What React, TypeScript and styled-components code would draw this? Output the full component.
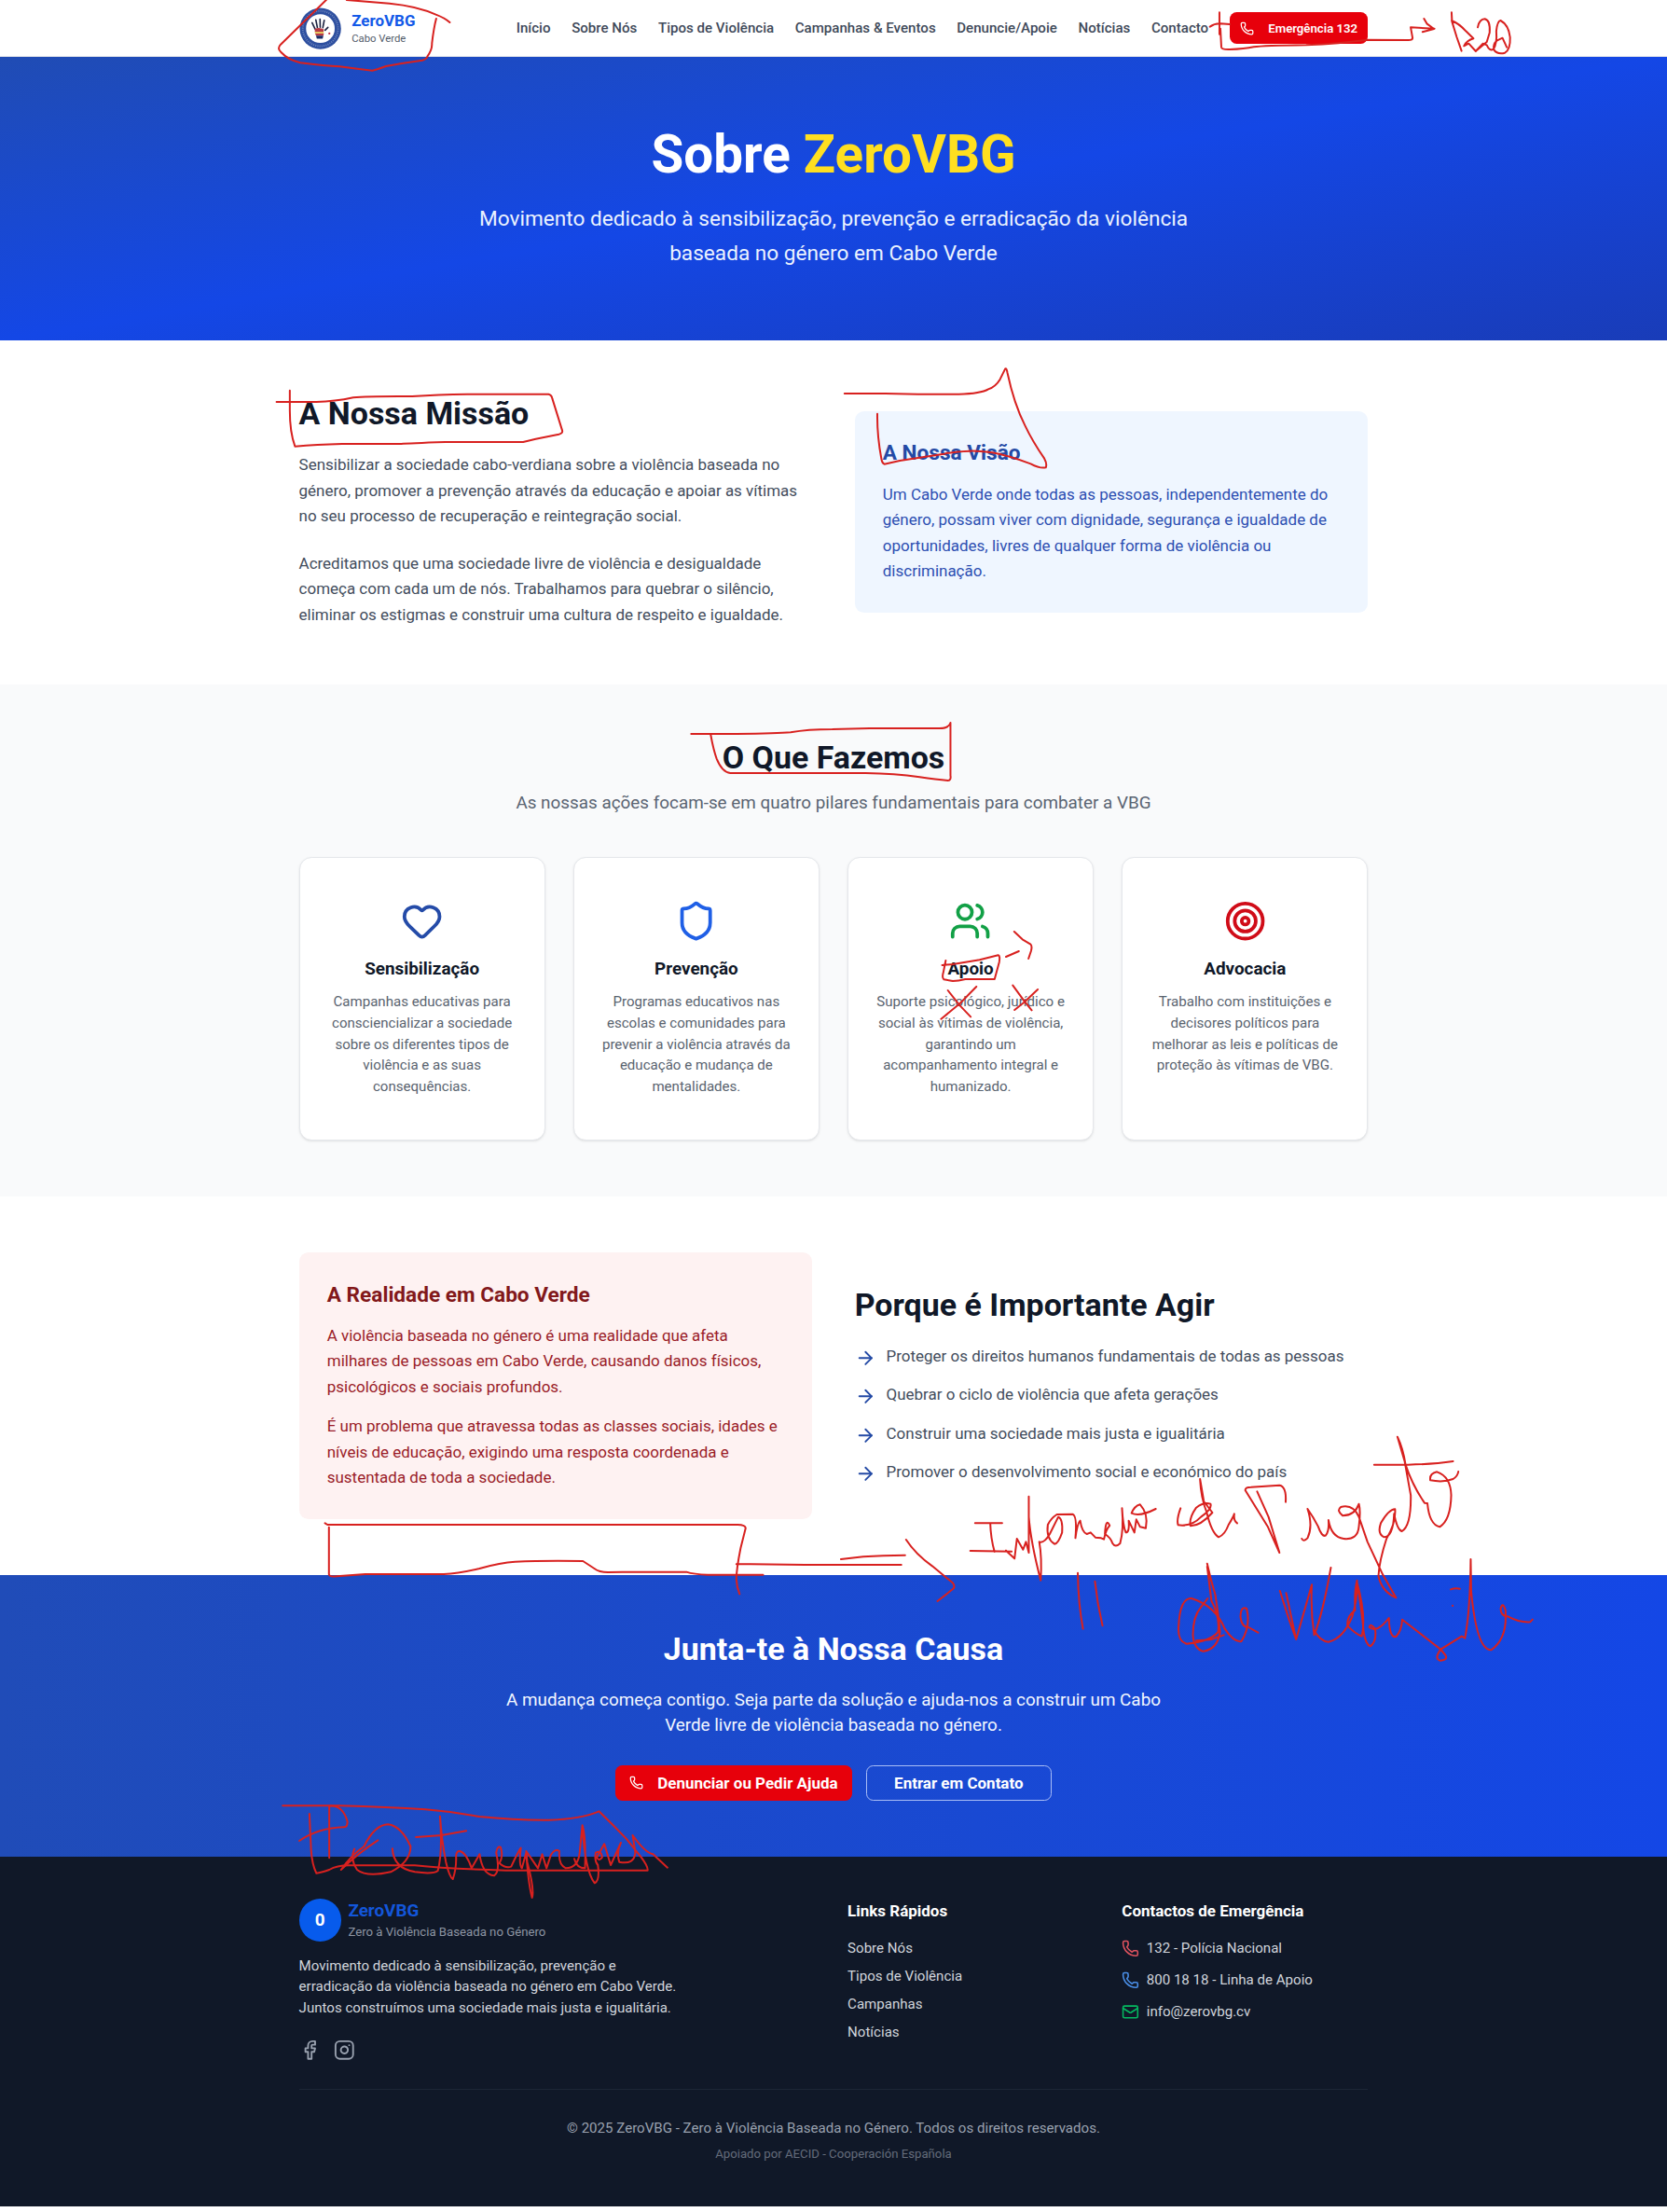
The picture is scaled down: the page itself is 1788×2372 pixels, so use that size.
import React from "react";
import styled, { createGlobalStyle } from "styled-components";
import {
  ArrowRight,
  Facebook,
  Heart,
  Instagram,
  Mail,
  Phone,
  Shield,
  Target,
  Users,
} from "lucide-react";

const GlobalStyle = createGlobalStyle`
  html { font-size: 15.09px; }
  *, *::before, *::after { box-sizing: border-box; }
  body {
    margin: 0;
    background: #fff;
    color: #101828;
    font-family: Roboto, "Liberation Sans", sans-serif;
    line-height: 1.5;
  }
  h1, h2, h3, h4, p, ul { margin: 0; padding: 0; }
  ul { list-style: none; }
  a { color: inherit; text-decoration: none; }
  button { font-family: inherit; }
  svg { display: block; flex-shrink: 0; }
`;

const Page = styled.div`
  position: relative;
  overflow: hidden;
`;

const Container = styled.div`
  width: 76rem;
  margin: 0 auto;
`;

/* Header */

const Header = styled.header`
  background: #fff;
  border-bottom: 1px solid #e5e7eb;
`;

const HeaderRow = styled(Container)`
  display: flex;
  align-items: center;
  justify-content: space-between;
  height: 4rem;
`;

const Brand = styled.a<{ $gap: string }>`
  display: flex;
  align-items: center;
  gap: ${(p) => p.$gap};
`;

const BrandName = styled.div`
  font-size: 1.125rem;
  line-height: 1.5rem;
  font-weight: 700;
  color: #1259e8;
`;

const BrandPlace = styled.div`
  font-size: 0.75rem;
  line-height: 1rem;
  color: #535d6b;
`;

const Nav = styled.nav`
  display: flex;
  align-items: center;
  gap: 1.5rem;
`;

const NavLink = styled.a`
  font-size: 1rem;
  font-weight: 500;
  color: #3f4a5a;
  white-space: nowrap;
`;

const Button = styled.button<{ $kind: "danger" | "outline"; $size: "sm" | "lg" }>`
  display: inline-flex;
  align-items: center;
  justify-content: center;
  gap: 1rem;
  white-space: nowrap;
  color: #fff;
  border-radius: 0.5rem;
  font-weight: ${(p) => (p.$size === "sm" ? 600 : 700)};
  font-size: ${(p) => (p.$size === "sm" ? "0.875rem" : "1.125rem")};
  height: ${(p) => (p.$size === "sm" ? "2.25rem" : "2.5rem")};
  padding: 0 ${(p) => (p.$kind === "outline" ? "1.95rem" : p.$size === "sm" ? "0.75rem" : "1rem")};
  background: ${(p) => (p.$kind === "danger" ? "#e7000b" : "transparent")};
  border: ${(p) => (p.$kind === "danger" ? "none" : "1px solid #a9bdf6")};
`;

/* Hero */

const Hero = styled.section`
  background: linear-gradient(to bottom right, #204cb4, #1447e6 50%, #193cb8);
  padding: 5.05rem 0 4.92rem;
  text-align: center;
`;

const HeroTitle = styled.h1`
  font-size: 3.75rem;
  line-height: 1;
  font-weight: 700;
  color: #fff;
  margin-bottom: 1.5rem;

  span { color: #ffdf20; }
`;

const HeroText = styled.p`
  width: 56rem;
  margin: 0 auto;
  font-size: 1.5rem;
  line-height: 1.625;
  color: #eaf2ff;
`;

/* Shared sections */

const Section = styled.section<{ $tint?: boolean }>`
  padding: 4rem 0;
  background: ${(p) => (p.$tint ? "#f9fafb" : "#fff")};
`;

const TwoColumns = styled(Container)`
  display: grid;
  grid-template-columns: 1fr 1fr;
  gap: 3rem;
  align-items: center;
`;

const Heading = styled.h2<{ $space: string; $light?: boolean }>`
  font-size: 2.25rem;
  line-height: 2.5rem;
  font-weight: 700;
  color: ${(p) => (p.$light ? "#fff" : "#101828")};
  margin-bottom: ${(p) => p.$space};
`;

const BodyText = styled.p`
  font-size: 1.125rem;
  line-height: 1.625;
  color: #434d5d;

  & + & { margin-top: 1.5rem; }
`;

const Callout = styled.div<{ $tone: "blue" | "red" }>`
  padding: 2rem;
  border-radius: 0.65rem;
  background: ${(p) => (p.$tone === "blue" ? "#eff6ff" : "#fef2f2")};

  h3 {
    font-size: 1.5rem;
    line-height: 2rem;
    font-weight: 700;
    margin-bottom: 1rem;
    color: ${(p) => (p.$tone === "blue" ? "#244aa5" : "#82181a")};
  }
  p {
    font-size: 1.125rem;
    line-height: 1.625;
    color: ${(p) => (p.$tone === "blue" ? "#2d4fb2" : "#9a1c28")};
  }
  p + p { margin-top: 0.97rem; }
`;

/* Pillars */

const Intro = styled.div`
  text-align: center;
  margin-bottom: 2.96rem;

  p {
    font-size: 1.25rem;
    line-height: 1.75rem;
    color: #5a6472;
  }
`;

const Cards = styled.div`
  display: grid;
  grid-template-columns: repeat(4, 1fr);
  gap: 2rem;
`;

const Card = styled.article`
  display: flex;
  flex-direction: column;
  align-items: center;
  padding: 3rem 1.5rem;
  text-align: center;
  background: #fff;
  border: 1px solid #e5e7eb;
  border-radius: 0.875rem;
  box-shadow: 0 1px 3px rgba(0, 0, 0, 0.08), 0 1px 2px -1px rgba(0, 0, 0, 0.08);

  h3 {
    margin: 1rem 0 0.75rem;
    font-size: 1.25rem;
    line-height: 1.75rem;
    font-weight: 700;
  }
  p {
    font-size: 1rem;
    line-height: 1.5rem;
    color: #59636f;
  }
`;

const Reasons = styled.ul`
  display: flex;
  flex-direction: column;
  gap: 1rem;
`;

const Reason = styled.li`
  display: flex;
  align-items: flex-start;
  gap: 0.75rem;
  font-size: 1.125rem;
  line-height: 1.75rem;
  color: #434d5d;

  svg { margin-top: 0.25rem; color: #244aa5; }
`;

/* Call to action */

const Cta = styled.section`
  padding: 4rem 0;
  text-align: center;
  background: linear-gradient(to right, #204cb8, #1447e6);
`;

const CtaText = styled.p`
  width: 48rem;
  margin: 0 auto 2rem;
  font-size: 1.25rem;
  line-height: 1.75rem;
  color: #f1f6ff;
`;

const CtaActions = styled.div`
  display: flex;
  justify-content: center;
  gap: 1rem;
`;

/* Footer */

const Footer = styled.footer`
  background: #101828;
  color: #fff;
  padding: 3rem 0 3.03rem;
`;

const FooterGrid = styled.div`
  display: grid;
  grid-template-columns: repeat(4, 1fr);
  gap: 2rem;
`;

const About = styled.div`
  grid-column: span 2;
`;

const ZeroBadge = styled.div`
  display: flex;
  align-items: center;
  justify-content: center;
  width: 3rem;
  height: 3rem;
  border-radius: 50%;
  background: #075bec;
  font-size: 1.25rem;
  font-weight: 700;
`;

const FooterBrandName = styled(BrandName)`
  font-size: 1.25rem;
  line-height: 1.75rem;
  color: #1356da;
`;

const FooterTagline = styled.div`
  font-size: 0.875rem;
  line-height: 1.25rem;
  color: #8d95a3;
`;

const AboutText = styled.p`
  width: 28rem;
  margin: 1rem 0 1.5rem;
  font-size: 1rem;
  line-height: 1.5rem;
  color: #d1d5dc;
`;

const Social = styled.div`
  display: flex;
  gap: 1rem;
  color: #99a1af;
`;

const FooterTitle = styled.h4`
  font-size: 1.125rem;
  line-height: 1.75rem;
  font-weight: 700;
  margin-bottom: 1rem;
`;

const FooterList = styled.ul<{ $gap: string }>`
  display: flex;
  flex-direction: column;
  gap: ${(p) => p.$gap};
  font-size: 1rem;
  line-height: 1.5rem;
  color: #d1d5dc;

  li {
    display: flex;
    align-items: center;
    gap: 0.5rem;
  }
`;

const Legal = styled.div`
  margin-top: 2rem;
  padding-top: 2rem;
  border-top: 1px solid #1c2636;
  text-align: center;
  color: #99a1af;
  font-size: 1rem;
  line-height: 1.5rem;

  small {
    display: block;
    margin-top: 0.5rem;
    font-size: 0.875rem;
    line-height: 1.25rem;
    color: #646c7b;
  }
`;

/* Pen marks lie over the whole page */

const InkLayer = styled.svg`
  position: absolute;
  top: 0;
  left: 0;
  pointer-events: none;

  path {
    fill: none;
    stroke: #d8211f;
    stroke-width: 2px;
    stroke-linecap: round;
    stroke-linejoin: round;
    vector-effect: non-scaling-stroke;
  }
`;

const navItems = [
  "Início",
  "Sobre Nós",
  "Tipos de Violência",
  "Campanhas & Eventos",
  "Denuncie/Apoie",
  "Notícias",
  "Contacto",
];

const pillars = [
  {
    Icon: Heart,
    color: "#244ba8",
    title: "Sensibilização",
    text: "Campanhas educativas para consciencializar a sociedade sobre os diferentes tipos de violência e as suas consequências.",
  },
  {
    Icon: Shield,
    color: "#1f5fe6",
    title: "Prevenção",
    text: "Programas educativos nas escolas e comunidades para prevenir a violência através da educação e mudança de mentalidades.",
  },
  {
    Icon: Users,
    color: "#12a046",
    title: "Apoio",
    text: "Suporte psicológico, jurídico e social às vítimas de violência, garantindo um acompanhamento integral e humanizado.",
  },
  {
    Icon: Target,
    color: "#d00c18",
    title: "Advocacia",
    text: "Trabalho com instituições e decisores políticos para melhorar as leis e políticas de proteção às vítimas de VBG.",
  },
];

const reasons = [
  "Proteger os direitos humanos fundamentais de todas as pessoas",
  "Quebrar o ciclo de violência que afeta gerações",
  "Construir uma sociedade mais justa e igualitária",
  "Promover o desenvolvimento social e económico do país",
];

const quickLinks = ["Sobre Nós", "Tipos de Violência", "Campanhas", "Notícias"];

const contacts = [
  { Icon: Phone, color: "#e0535f", label: "132 - Polícia Nacional" },
  { Icon: Phone, color: "#4a8fe8", label: "800 18 18 - Linha de Apoio" },
  { Icon: Mail, color: "#05b860", label: "info@zerovbg.cv" },
];

/* Each note has an origin, a width in page pixels (drawn on a 1568-unit grid) and its strokes. */
const notes = [
  {
    x: 280, y: 0, w: 600,
    d: [
      "M186 -4L55 143Q44 156 56 168Q75 192 110 202Q180 212 220 214Q270 222 312 227Q330 222 350 213Q400 202 452 194Q464 190 466 182Q480 160 479 140Q484 90 491 60",
      "M240 0Q330 8 360 11Q440 20 490 47Q515 58 529 72",
    ],
  },
  {
    x: 860, y: 0, w: 800,
    d: [
      "M858 86Q868 75 880 76L900 78M878 40V110M880 92L882 152Q883 160 900 159Q930 158 950 151Q970 147 1060 145Q1130 140 1190 128L1275 129Q1284 129 1284 122L1280 88L1330 92M1308 60L1314 76L1329 93L1305 103",
      "M1366 40L1367 70L1377 120L1387 164M1366 66Q1382 76 1396 100L1412 124Q1398 130 1392 148L1402 140L1417 165M1421 88Q1424 62 1436 61Q1448 66 1446 105L1440 135L1417 164L1432 140L1440 145Q1446 166 1454 158Q1462 140 1460 100Q1462 68 1469 66Q1486 80 1489 120Q1490 160 1478 170Q1462 176 1455 160Q1452 142 1462 130L1473 122L1482 152",
    ],
  },
  {
    x: 280, y: 380, w: 620,
    d: [
      "M42 153H150Q200 152 250 139Q290 134 410 135Q480 129 560 128H780Q788 130 790 142L817 245Q819 254 808 257L745 272L711 282H500Q400 286 380 288H220Q150 290 92 296Q78 250 78 180V116",
    ],
  },
  {
    x: 890, y: 380, w: 620,
    d: [
      "M40 126H150L240 128H350Q410 126 430 112Q450 104 462 80L476 46Q480 44 482 60Q500 160 530 230Q550 280 582 335Q590 352 586 364Q570 368 545 352Q480 324 440 316Q400 310 380 311Q340 312 310 320L190 342L148 353Q142 350 140 336Q128 260 129 191",
    ],
  },
  {
    x: 540, y: 760, w: 700,
    d: [
      "M451 81H560Q660 80 690 76Q730 66 790 66L880 63H1045Q1070 64 1074 45V215Q1076 230 1068 231Q1040 228 1000 220Q940 208 870 207H545Q525 204 512 160Q504 130 498 84",
    ],
  },
  {
    x: 890, y: 900, w: 600,
    d: [
      "M315 405L345 402L420 388L472 373Q478 374 475 395L462 450H380Q360 456 345 456L320 451Q314 446 318 430L325 390",
      "M494 378L530 360M517 297L540 322L563 338Q568 344 564 360L557 384",
      "M331 486L365 535L395 571M411 474L365 528L312 578M513 470L545 520L566 550M583 483L545 524L518 549",
    ],
  },
  {
    x: 300, y: 1320, w: 600,
    d: [
      "M127 940L134 945H1280Q1305 944 1306 956L1292 1020Q1280 1090 1280 1120Q1281 1145 1289 1168",
      "M138 953V1105Q140 1114 160 1111L240 1104H460Q500 1102 560 1086Q620 1066 660 1064Q740 1060 850 1062L882 1086Q895 1098 920 1098L960 1097H1140Q1160 1105 1200 1106H1355",
      "M1280 1072H1320Q1450 1075 1600 1074",
    ],
  },
  {
    x: 880, y: 1360, w: 800,
    d: [
      "M-20 954H170M43 936L90 928Q130 923 178 923M180 873Q200 920 235 958L278 1012Q283 1020 280 1030L246 1071",
      "M325 820H382M357 820Q358 870 366 912M315 909L402 911M390 908L408 934L413 870L426 905L432 880L438 915V734M438 734V800Q442 880 463 1004Q466 930 460 880Q470 886 482 855L500 800Q510 806 508 850Q500 886 492 887Q474 870 478 825Q484 805 497 792L530 791Q540 795 536 868Q540 820 546 812Q550 850 560 855L568 850L578 866L590 868L596 872Q600 840 608 828Q600 800 598 855Q610 866 614 885Q620 900 630 885Q638 840 634 772Q636 830 642 850Q650 850 648 812L660 850L664 808L672 832L684 836Q690 790 672 760Q660 765 654 788Q672 800 705 774",
    ],
  },
  {
    x: 880, y: 1360, w: 800,
    d: [
      "M757 772Q748 810 752 826Q780 832 800 800Q824 775 820 758Q806 750 790 770Q774 805 778 829Q800 828 824 786L806 750L798 678Q800 740 812 785Q822 850 837 865Q850 858 858 825Q868 800 870 790Q868 812 876 820",
      "M918 718L942 800L965 915L940 830L893 714Q893 704 905 704L965 698Q980 702 978 752",
      "M1012 870Q1015 882 1024 868Q1036 830 1024 774Q1036 800 1046 830Q1054 865 1062 860Q1070 845 1068 810Q1074 865 1100 870Q1130 875 1132 830Q1136 780 1132 758Q1124 795 1098 796Q1084 780 1094 768Q1120 758 1132 800L1150 880L1182 985L1210 1060Q1180 1040 1173 990Q1175 940 1190 870Q1210 820 1208 775Q1195 775 1178 820Q1170 855 1185 865Q1204 865 1206 790Q1212 840 1222 846Q1242 830 1241 730L1228 620L1213 542Q1225 580 1230 632Q1245 700 1270 755L1276 756Q1280 825 1302 832Q1325 810 1326 730Q1325 670 1296 655Q1280 660 1282 682Q1310 690 1330 678Q1340 668 1341 654",
      "M1164 632H1235Q1290 630 1330 621",
      "M541 980Q542 1080 552 1160M577 1007Q582 1080 593 1150",
      "M813 950Q820 1000 830 1050Q838 1130 840 1170Q835 1225 805 1232Q785 1225 783 1180Q783 1120 800 1090L814 1062M813 960L822 1070Q840 1120 836 1170Q820 1200 770 1208Q750 1200 753 1150Q756 1060 780 1062Q830 1085 850 1160Q870 1205 885 1200Q905 1150 896 1095Q884 1085 883 1120Q885 1155 900 1155L920 1172M790 1198L820 1195L848 1180",
      "M966 1038L985 1130L1000 1194L979 1045M1000 1194Q1012 1130 1033 1018Q1030 1100 1038 1180Q1056 1110 1073 963M1038 1165Q1050 1200 1068 1202Q1100 1190 1118 1120Q1130 1060 1128 1004Q1122 1040 1124 1100Q1106 1120 1108 1150Q1124 1175 1138 1184Q1148 1120 1128 1010Q1138 1100 1142 1170Q1146 1210 1156 1216Q1170 1200 1166 1160Q1156 1140 1154 1155Q1170 1175 1195 1125Q1196 1190 1210 1185Q1222 1165 1223 1130L1304 1226L1348 1184L1355 1190Q1366 1100 1367 936L1368 1040Q1380 1230 1410 1228Q1445 1190 1440 1100Q1434 1070 1430 1095Q1430 1120 1445 1120Q1470 1140 1492 1138L1497 1130",
      "M1304 1226Q1290 1255 1302 1262Q1320 1260 1314 1245L1304 1226M1325 1033Q1335 1028 1344 1031M1329 1085V1086",
    ],
  },
  {
    x: 290, y: 1720, w: 900,
    d: [
      "M23 649H130Q220 653 290 661Q340 668 390 684Q460 696 520 695Q580 692 614 667Q640 710 665 755L693 815Q706 845 705 857H440Q330 852 270 841L150 841Q125 840 110 855Q94 865 86 866Q78 840 76 790L73 675",
      "M110 817V650Q135 645 144 700Q144 718 138 718Q90 720 54 762",
      "M201 760Q165 800 132 855Q150 810 175 780Q195 710 220 709Q245 715 262 780Q262 830 225 862Q180 880 162 855Q148 820 157 788",
      "M272 750L320 744L366 730M228 787Q230 850 270 862Q305 870 313 858Q322 800 317 683Q320 760 328 830Q335 880 341 885Q348 850 347 810Q348 794 354 795Q366 800 376 850L391 805Q396 870 418 874Q430 860 422 800Q424 778 430 782Q436 810 428 834Q440 852 450 845Q462 800 468 785Q464 840 470 850L478 800Q482 900 489 945Q494 920 480 830L478 795L500 850L508 805L516 850L524 808Q532 785 540 795Q538 840 552 850Q575 850 578 800L583 712Q590 750 588 850Q572 850 568 820M583 712Q588 860 606 898Q616 890 612 840Q605 825 608 800Q618 790 620 815Q614 830 610 815L624 772L636 840L655 768Q646 800 652 830Q680 840 682 800L677 744Q700 800 715 805L742 848",
    ],
  },
];

const Logo = () => (
  <svg width="3rem" height="3rem" viewBox="0 0 48 48">
    <circle cx="24" cy="24" r="23.5" fill="#2d4f9f" />
    <circle cx="24" cy="24" r="20" fill="none" stroke="#c8d3ee" strokeWidth="2" strokeDasharray="1.1 1.3" opacity="0.4" />
    <circle cx="24" cy="24" r="16.3" fill="#fff" />
    <g stroke="#1b2240" strokeWidth="1.7" strokeLinecap="round" fill="none">
      <path d="M14.6 17.4L18 24.6M18.8 14L20.6 22.8M23.6 13.2L23.8 22.6M28.4 14.6L26.8 23M32.6 22.6L29.4 25.8" />
    </g>
    <path d="M17.6 24.4Q23 21.8 28 25L27.4 28H17.8Z" fill="#b83a45" />
    <path d="M17.8 27.6H27.8V29.6H17.8Z" fill="#e5c35a" />
    <path d="M18 29.6H28L27.4 32H19Z" fill="#b83a45" />
    <path d="M19 32H27.4L26.6 35.4H20Z" fill="#1b2b66" />
    <circle cx="34.2" cy="29.6" r="1.2" fill="#c3344a" />
  </svg>
);

const Ink = () => (
  <InkLayer width="1788" height="2372" viewBox="0 0 1788 2372">
    {notes.map((n, i) => (
      <g key={i} transform={`translate(${n.x} ${n.y}) scale(${n.w / 1568} ${1 / 3})`}>
        {n.d.map((d, j) => (
          <path key={j} d={d} />
        ))}
      </g>
    ))}
  </InkLayer>
);

export default function App() {
  return (
    <Page>
      <GlobalStyle />
      <Header>
        <HeaderRow>
          <Brand href="#" $gap="0.75rem">
            <Logo />
            <div>
              <BrandName>ZeroVBG</BrandName>
              <BrandPlace>Cabo Verde</BrandPlace>
            </div>
          </Brand>
          <Nav>
            {navItems.map((item) => (
              <NavLink key={item} href="#">{item}</NavLink>
            ))}
            <Button $kind="danger" $size="sm">
              <Phone size="1rem" />
              Emergência 132
            </Button>
          </Nav>
        </HeaderRow>
      </Header>

      <Hero>
        <HeroTitle>Sobre <span>ZeroVBG</span></HeroTitle>
        <HeroText>
          Movimento dedicado à sensibilização, prevenção e erradicação da violência<br />
          baseada no género em Cabo Verde
        </HeroText>
      </Hero>

      <Section>
        <TwoColumns>
          <div>
            <Heading $space="1.5rem">A Nossa Missão</Heading>
            <BodyText>
              Sensibilizar a sociedade cabo-verdiana sobre a violência baseada no género, promover a
              prevenção através da educação e apoiar as vítimas no seu processo de recuperação e
              reintegração social.
            </BodyText>
            <BodyText>
              Acreditamos que uma sociedade livre de violência e desigualdade começa com cada um de
              nós. Trabalhamos para quebrar o silêncio, eliminar os estigmas e construir uma cultura
              de respeito e igualdade.
            </BodyText>
          </div>
          <Callout $tone="blue">
            <h3>A Nossa Visão</h3>
            <p>
              Um Cabo Verde onde todas as pessoas, independentemente do género, possam viver com
              dignidade, segurança e igualdade de oportunidades, livres de qualquer forma de
              violência ou discriminação.
            </p>
          </Callout>
        </TwoColumns>
      </Section>

      <Section $tint>
        <Container>
          <Intro>
            <Heading $space="1.07rem">O Que Fazemos</Heading>
            <p>As nossas ações focam-se em quatro pilares fundamentais para combater a VBG</p>
          </Intro>
          <Cards>
            {pillars.map(({ Icon, color, title, text }) => (
              <Card key={title}>
                <Icon size="3rem" color={color} />
                <h3>{title}</h3>
                <p>{text}</p>
              </Card>
            ))}
          </Cards>
        </Container>
      </Section>

      <Section>
        <TwoColumns>
          <Callout $tone="red">
            <h3>A Realidade em Cabo Verde</h3>
            <p>
              A violência baseada no género é uma realidade que afeta milhares de pessoas em Cabo
              Verde, causando danos físicos, psicológicos e sociais profundos.
            </p>
            <p>
              É um problema que atravessa todas as classes sociais, idades e níveis de educação,
              exigindo uma resposta coordenada e sustentada de toda a sociedade.
            </p>
          </Callout>
          <div>
            <Heading $space="1.5rem">Porque é Importante Agir</Heading>
            <Reasons>
              {reasons.map((reason) => (
                <Reason key={reason}>
                  <ArrowRight size="1.5rem" />
                  {reason}
                </Reason>
              ))}
            </Reasons>
          </div>
        </TwoColumns>
      </Section>

      <Cta>
        <Heading $space="1.5rem" $light>Junta-te à Nossa Causa</Heading>
        <CtaText>
          A mudança começa contigo. Seja parte da solução e ajuda-nos a construir um Cabo Verde
          livre de violência baseada no género.
        </CtaText>
        <CtaActions>
          <Button $kind="danger" $size="lg">
            <Phone size="1rem" />
            Denunciar ou Pedir Ajuda
          </Button>
          <Button $kind="outline" $size="lg">Entrar em Contato</Button>
        </CtaActions>
      </Cta>

      <Footer>
        <Container>
          <FooterGrid>
            <About>
              <Brand href="#" $gap="0.5rem">
                <ZeroBadge>0</ZeroBadge>
                <div>
                  <FooterBrandName>ZeroVBG</FooterBrandName>
                  <FooterTagline>Zero à Violência Baseada no Género</FooterTagline>
                </div>
              </Brand>
              <AboutText>
                Movimento dedicado à sensibilização, prevenção e erradicação da violência baseada no
                género em Cabo Verde. Juntos construímos uma sociedade mais justa e igualitária.
              </AboutText>
              <Social>
                <Facebook size="1.5rem" />
                <Instagram size="1.5rem" />
              </Social>
            </About>
            <div>
              <FooterTitle>Links Rápidos</FooterTitle>
              <FooterList $gap="0.5rem">
                {quickLinks.map((link) => (
                  <li key={link}><a href="#">{link}</a></li>
                ))}
              </FooterList>
            </div>
            <div>
              <FooterTitle>Contactos de Emergência</FooterTitle>
              <FooterList $gap="0.75rem">
                {contacts.map(({ Icon, color, label }) => (
                  <li key={label}>
                    <Icon size="1.25rem" color={color} />
                    {label}
                  </li>
                ))}
              </FooterList>
            </div>
          </FooterGrid>
          <Legal>
            © 2025 ZeroVBG - Zero à Violência Baseada no Género. Todos os direitos reservados.
            <small>Apoiado por AECID - Cooperación Española</small>
          </Legal>
        </Container>
      </Footer>
      <Ink />
    </Page>
  );
}
